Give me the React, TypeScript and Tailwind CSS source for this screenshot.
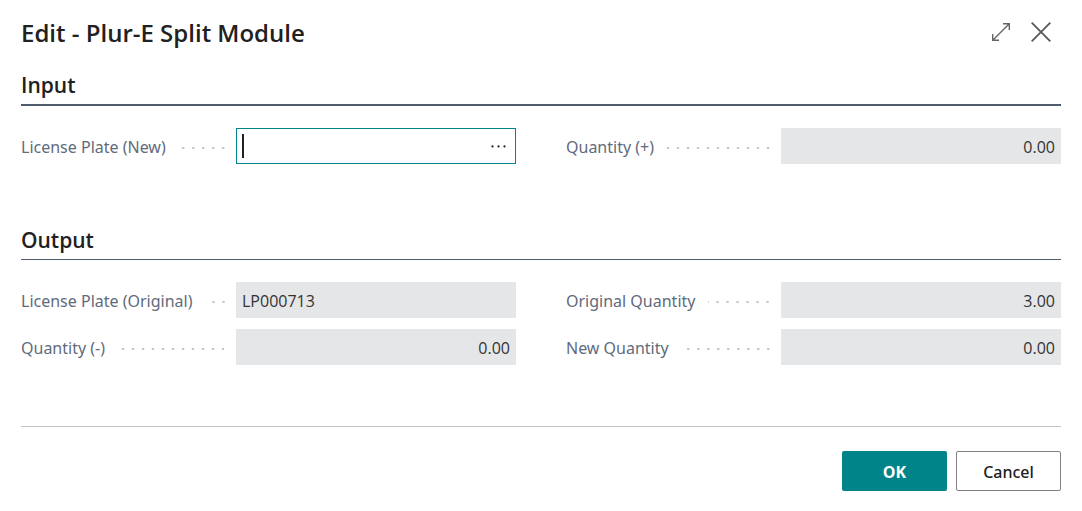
import { useId, useState } from "react";
import type { ReactNode } from "react";

type FieldProps = {
  label: string;
  value: string;
  numeric?: boolean;
};

function FieldRow({ id, label, children }: { id: string; label: string; children: ReactNode }) {
  return (
    <div className="flex h-9 min-w-0 items-center">
      <div className="flex w-[215px] shrink-0 items-center gap-[13px] pr-2.5">
        <label htmlFor={id} className="whitespace-nowrap pt-0.5 font-['Noto_Sans','Open_Sans',sans-serif] text-base leading-6 text-[#5f6b7c]">
          {label}
        </label>
        <svg className="mt-[3px] h-0.5 min-w-0 flex-1" viewBox="0 0 200 2" preserveAspectRatio="xMaxYMid slice" aria-hidden="true">
          {Array.from({ length: 20 }, (_, i) => (
            <circle key={i} cx={197 - i * 10} cy={1} r={1.3} fill="#c6c6c6" />
          ))}
        </svg>
      </div>
      {children}
    </div>
  );
}

function ReadOnlyField({ label, value, numeric = false }: FieldProps) {
  const id = useId();
  return (
    <FieldRow id={id} label={label}>
      <input
        id={id}
        readOnly
        value={value}
        className={`h-9 w-full min-w-0 flex-1 bg-[#e5e6e8] px-1.5 pt-0.5 text-base text-[#333333] outline-none ${
          numeric ? "text-right" : "text-left"
        }`}
      />
    </FieldRow>
  );
}

function LookupField({ label }: { label: string }) {
  const id = useId();
  const [value, setValue] = useState("");
  return (
    <FieldRow id={id} label={label}>
      <div className="relative flex h-9 min-w-0 flex-1 items-center border border-[#00848a] bg-white">
        <input
          id={id}
          value={value}
          onChange={(e) => setValue(e.target.value)}
          className="h-full min-w-0 flex-1 bg-transparent px-1.5 text-base text-[#212121] outline-none"
        />
        {value === "" && <span className="pointer-events-none absolute left-[5px] h-6 w-0.5 bg-[#212121]" />}
        <button type="button" aria-label="Look up value" className="flex h-full w-[34px] shrink-0 items-center justify-center">
          <svg width="16" height="4" viewBox="0 0 16 4" fill="#212121" aria-hidden="true">
            <circle cx="2.5" cy="2.4" r="1.1" />
            <circle cx="8.5" cy="2.4" r="1.1" />
            <circle cx="14.5" cy="2.4" r="1.1" />
          </svg>
        </button>
      </div>
    </FieldRow>
  );
}

export default function App() {
  return (
    <main
      role="dialog"
      aria-labelledby="dialog-title"
      className="bg-white px-[21px] pt-4 pb-5 font-['Open_Sans','Noto_Sans',sans-serif] text-[#212121]"
    >
      <header className="flex h-8 items-center justify-between">
        <h1 id="dialog-title" className="pt-0.5 text-2xl leading-8 font-semibold">
          Edit - Plur-E Split Module
        </h1>
        <div className="flex items-center gap-5 pr-2.5">
          <button type="button" aria-label="Expand" className="flex h-8 w-5 items-center justify-center">
            <svg width="20" height="20" viewBox="0 0 20 20" fill="none" stroke="#666666" strokeWidth="1.4" aria-hidden="true">
              <path d="M1.5 18.5 18.5 1.5M12 1.7H18.3V8M1.7 12V18.3H8" />
            </svg>
          </button>
          <button type="button" aria-label="Close" className="flex h-8 w-5 items-center justify-center">
            <svg width="20" height="20" viewBox="0 0 20 20" fill="none" stroke="#595959" strokeWidth="1.8" aria-hidden="true">
              <path d="M.7.7 19.3 19.3M19.3.7.7 19.3" />
            </svg>
          </button>
        </div>
      </header>

      <section className="pt-5">
        <h2 className="h-[38px] border-b-2 border-[#505c6d] text-[21px] leading-[34px] font-semibold">Input</h2>
        <div className="grid grid-cols-2 gap-x-[50px] gap-y-[11px] pt-[22px]">
          <LookupField label="License Plate (New)" />
          <ReadOnlyField label="Quantity (+)" value="0.00" numeric />
        </div>
      </section>

      <section className="pt-[58px]">
        <h2 className="h-[38px] border-b border-[#505c6d] text-[21px] leading-9 font-semibold">Output</h2>
        <div className="grid grid-cols-2 gap-x-[50px] gap-y-[11px] pt-[22px]">
          <ReadOnlyField label="License Plate (Original)" value="LP000713" />
          <ReadOnlyField label="Original Quantity" value="3.00" numeric />
          <ReadOnlyField label="Quantity (-)" value="0.00" numeric />
          <ReadOnlyField label="New Quantity" value="0.00" numeric />
        </div>
      </section>

      <footer className="mt-[61px] flex justify-end gap-[9px] border-t border-[#c6c6c6] pt-6">
        <button type="button" className="h-10 w-[105px] rounded-xs bg-[#00848a] pt-0.5 text-base font-bold text-white">
          OK
        </button>
        <button type="button" className="h-10 w-[105px] rounded-xs border border-[#808080] bg-white pt-0.5 font-['Noto_Sans','Open_Sans',sans-serif] text-base font-medium">
          Cancel
        </button>
      </footer>
    </main>
  );
}
